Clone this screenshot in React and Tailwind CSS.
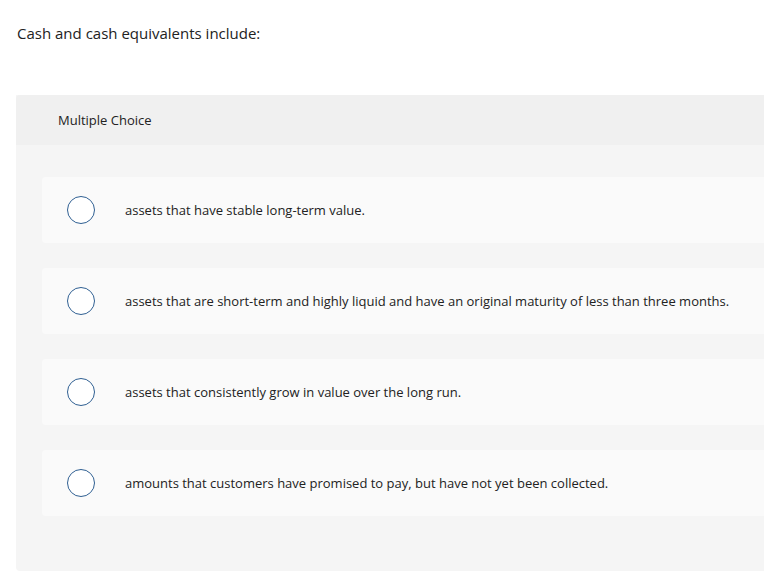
const options = [
  'assets that have stable long-term value.',
  'assets that are short-term and highly liquid and have an original maturity of less than three months.',
  'assets that consistently grow in value over the long run.',
  'amounts that customers have promised to pay, but have not yet been collected.',
]

const App = () => {
  return (
    <div className="w-[764px] h-[576px] overflow-hidden bg-white text-[#222]" style={{ fontFamily: '"Open Sans", "Noto Sans", sans-serif' }}>
      {/* Question */}
      <div className="pl-[17px] pt-[23px] h-[95px]">
        <p className="text-[15px] leading-[20px]">Cash and cash equivalents include:</p>
      </div>

      {/* Answer panel */}
      <div className="ml-4 w-[760px] h-[476px] rounded-bl bg-[#f5f5f5]">
        <div className="h-[50px] bg-[#f0f0f0] rounded-tl flex items-center pl-[42px]">
          <span className="text-[13px] pt-[2px]">Multiple Choice</span>
        </div>
        <div className="pt-8 pl-[26px] flex flex-col gap-[25px]">
          {options.map((text, i) => (
            <div key={i} className="h-[66px] bg-[#fafafa] rounded flex items-center">
              <div className="ml-[25px] w-[28px] h-[28px] rounded-full border-[1.5px] border-[#2f5f92] bg-white shrink-0" />
              <span className="ml-[30px] text-[13px] pt-[2px]">{text}</span>
            </div>
          ))}
        </div>
      </div>
    </div>
  )
}

export default App
